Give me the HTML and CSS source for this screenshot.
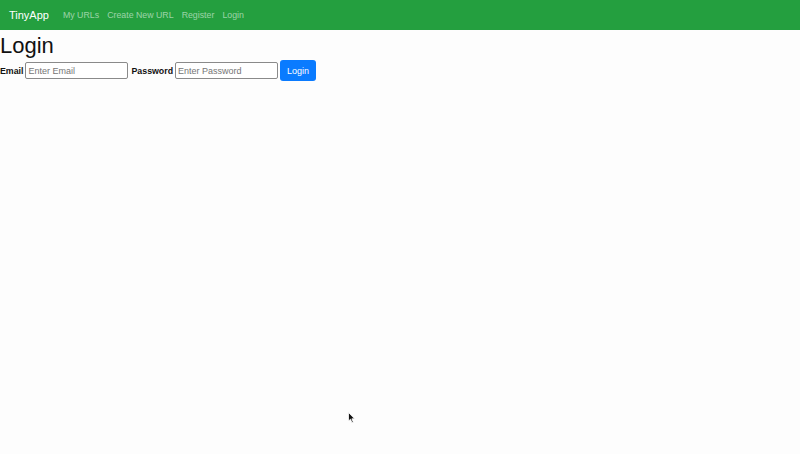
FILE: index.html
```html
<!DOCTYPE html>
<html>
<head>
<meta charset="utf-8">
<link rel="stylesheet" href="styles.css">
</head>
<body>
<nav class="navbar">
  <a class="brand" href="#">TinyApp</a>
  <ul class="nav">
    <li><a href="#">My URLs</a></li>
    <li><a href="#">Create New URL</a></li>
    <li><a href="#">Register</a></li>
    <li><a href="#">Login</a></li>
  </ul>
</nav>
<main>
  <h1>Login</h1>
  <form class="login-form">
    <label>Email</label>
    <input type="text" placeholder="Enter Email">
    <label>Password</label>
    <input type="password" placeholder="Enter Password">
    <button type="button" class="btn">Login</button>
  </form>
</main>
<svg class="cursor" width="8" height="12" viewBox="0 0 8 12">
  <path d="M0.5 0.5 L0.5 9 L2.5 7.2 L4 10.8 L5.3 10.2 L3.9 6.8 L6.6 6.8 Z" fill="#111" stroke="#fff" stroke-width="0.8"/>
</svg>
</body>
</html>
```
FILE: styles.css
```css
html, body {
  margin: 0;
  padding: 0;
  background: #fdfdfd;
  font-family: "Liberation Sans", Arial, sans-serif;
  color: #212529;
  height: 100%;
}
body {
  position: relative;
}
.navbar {
  background: #249f3f;
  height: 30px;
  display: flex;
  align-items: center;
  padding: 0 9px;
  box-sizing: border-box;
}
.brand {
  color: #fff;
  text-decoration: none;
  font-size: 11px;
  line-height: 1;
  margin-right: 14px;
}
.nav {
  list-style: none;
  display: flex;
  align-items: center;
  margin: 0;
  padding: 0;
  gap: 8px;
}
.nav li {
  line-height: 1;
}
.nav a {
  display: block;
  color: rgba(255, 255, 255, 0.55);
  text-decoration: none;
  font-size: 8.8px;
  line-height: 1;
}
main {
  padding: 0;
}
h1 {
  font-weight: 400;
  font-size: 22px;
  margin: 3px 0 1px 0;
  line-height: 26px;
  color: #111;
}
.login-form {
  display: flex;
  align-items: center;
}
label {
  font-weight: bold;
  font-size: 8.8px;
  color: #111;
  margin-right: 2px;
}
input {
  width: 103px;
  height: 17px;
  box-sizing: border-box;
  border: 1px solid #8a8a8a;
  border-radius: 2px;
  font-size: 9px;
  padding: 0 2px;
  margin-right: 3px;
  font-family: "Liberation Sans", Arial, sans-serif;
  background: #fff;
}
input::placeholder {
  color: #757575;
}
.btn {
  background: #0a7bff;
  color: #fff;
  border: none;
  border-radius: 3px;
  width: 36px;
  height: 21px;
  font-size: 9px;
  font-family: "Liberation Sans", Arial, sans-serif;
  padding: 0;
  margin-left: -1px;
}
.cursor {
  position: absolute;
  left: 348px;
  top: 412px;
}
```
